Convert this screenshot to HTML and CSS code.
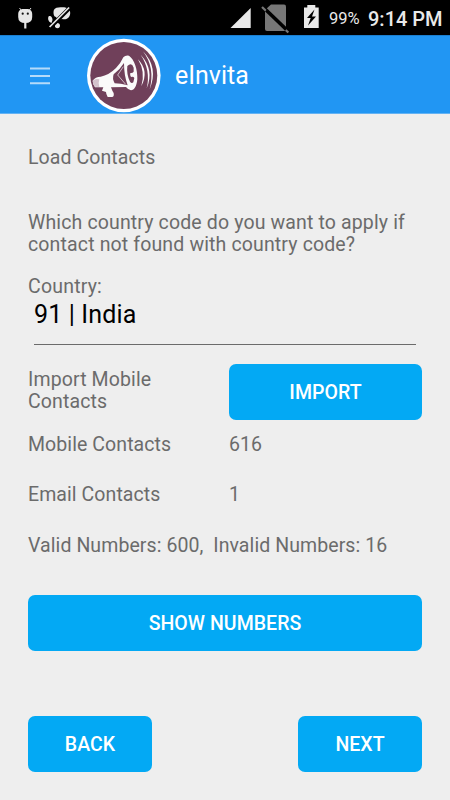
FILE: index.html
```html
<!DOCTYPE html>
<html lang="en">
<head>
<meta charset="utf-8">
<title>eInvita</title>
<link rel="stylesheet" href="styles.css">
</head>
<body>
<div class="status">
  <svg class="status-icons" width="80" height="35" viewBox="0 0 80 35">
    <g fill="#e6e6e6" stroke="#e6e6e6">
      <path d="M18.200 14q0-4 4-5h6q4 1 4 5v3q0 6-7 6t-7-6z" stroke="none"/>
      <path d="M21.500 10.500l-2-2.500M29 10.500l2-2.500" stroke-width="1"/>
      <path d="M25.300 22v6.500" stroke-width="2.200"/>
    </g>
    <circle cx="22.700" cy="13.700" r="1.100" fill="#111"/><circle cx="27.800" cy="13.700" r="1.100" fill="#111"/>
    <path fill="#e6e6e6" d="M53.500 12c0-3 2-4.500 5-4.500 4-.5 8-.5 10.500 1.500 2 3 1.500 7-1 9-2 2-5 1-6 1-3 1-5 0-6-2-2 0-2.500-3-2.500-5zM48.500 16.500c2-1.500 4 .5 4 3.500l-1 3c-3-1-4-4-3-6.500zM55 24c2-2 5-1 5 1.500 0 3-3 3.500-5 1.500z"/>
    <path d="M50.100 27.500l19.500-19.500" stroke="#000" stroke-width="4"/>
    <path d="M49.600 27l19.500-19.500" stroke="#e6e6e6" stroke-width="1.700"/>
  </svg>
  <svg class="status-icons" width="100" height="35" viewBox="230 0 100 35">
    <path fill="#e9e9e9" d="M230.500 28L250.700 8v20z"/>
    <path fill="#777" d="M265 10l6-5.500h13q2 0 2 2V29q0 2-2 2h-17q-2 0-2-2z"/>
    <path d="M264 7l25 24" stroke="#000" stroke-width="2"/>
    <path d="M262 7l26.300 25.500" stroke="#777" stroke-width="2.200"/>
    <path d="M266 10.500l20 19.300" stroke="#000" stroke-width="2.600"/>
    <path fill="#e9e9e9" d="M304 7.500h3.300V5h8v2.500h3.400V28H304z"/>
    <path fill="#000" d="M314.500 9.500l-7.500 8.500h3.700l-2.700 7.500 8-9h-4z"/>
  </svg>
  <span class="battery">99%</span>
  <span class="clock">9:14 PM</span>
</div>
<header class="bar">
  <svg class="menu" width="20" height="18" viewBox="0 0 20 18"><path d="M0 1.500h20M0 9h20M0 16.200h20" stroke="#b5dbfa" stroke-width="1.900"/></svg>
  <svg class="logo" width="74" height="76" viewBox="0 0 74 76">
    <circle cx="36.800" cy="38.500" r="36.800" fill="#fff"/>
    <circle cx="36.800" cy="38.500" r="33.500" fill="#70405a"/>
    <g transform="scale(.3333) translate(-21 -7)">
      <path fill="#fafafa" d="M38 138Q46 126 62 126Q86 122 108 100Q122 86 130 68Q136 61 147 63C163 74 173 104 172 134C170 154 163 167 153 167Q145 166 138 157L93 158Q97 170 101 175Q103 187 96 187L83 187Q78 178 78 172L66 168L70 158L45 158Q38 150 38 138z"/>
      <path fill="#d4c3cc" d="M38 138Q46 130 58 134Q54 146 58 157L45 156Q38 150 38 138z"/>
      <path fill="#70405a" d="M101 119Q119 106 132 85Q132 122 143 152Q122 146 104 146Q96 132 101 119z"/>
      <path d="M130 96L113 121L137 149" fill="none" stroke="#cdb9c4" stroke-width="3"/>
      <path fill="#70405a" d="M142 94Q155 82 161 99L161 111Q158 116 151 115Q149 121 153 127Q160 124 163 130L160 143Q155 148 150 141Q139 119 142 94z"/>
      <path fill="#fff" d="M174 74Q208 109 184 155Q197 111 174 74zM182 60Q224 106 200 161Q213 107 182 60zM189 50Q236 98 209 164Q226 99 189 50z"/>
    </g>
  </svg>
  <h1 class="title">eInvita</h1>
</header>
<main class="content">
  <p class="heading">Load Contacts</p>
  <p class="question">Which country code do you want to apply if<br>contact not found with country code?</p>
  <p class="country">Country:</p>
  <div class="select">91 | India</div>
  <div class="row import">
    <p>Import Mobile<br>Contacts</p>
    <button class="btn">IMPORT</button>
  </div>
  <div class="row stat"><p>Mobile Contacts</p><p>616</p></div>
  <div class="row stat second"><p>Email Contacts</p><p>1</p></div>
  <p class="valid">Valid Numbers: 600,&nbsp; Invalid Numbers: 16</p>
  <button class="btn show">SHOW NUMBERS</button>
  <div class="nav"><button class="btn">BACK</button><button class="btn">NEXT</button></div>
</main>
</body>
</html>
```
FILE: styles.css
```css
* { box-sizing: border-box; }
body {
  margin: 0;
  width: 450px;
  height: 800px;
  overflow: hidden;
  background: #eee;
  color: #6b6b6b;
  font: 19.5px/22px Roboto, sans-serif;
  letter-spacing: 0.08px;
}
p, h1 { margin: 0; font-weight: 400; }
svg { display: block; flex: none; }
.status {
  height: 35px;
  background: #000;
  color: #e9e9e9;
  display: flex;
  align-items: center;
  white-space: nowrap;
  letter-spacing: 0;
}
.status-icons + .status-icons { margin-left: 150px; }
.battery { font-size: 16.5px; margin: 3px 0 0 -1px; width: 38px; }
.clock { font-size: 20px; font-weight: 500; margin: 2px 0 0 1px; }
.bar {
  height: 79px;
  background: #2196f3;
  border-top: 1px solid #1b7fcf;
  border-bottom: 1px solid #63b2f3;
  display: flex;
  align-items: center;
}
.menu { margin: 2px 0 0 30px; }
.logo { margin-left: 37px; }
.title { margin: 2px 0 0 14px; color: #fff; font-size: 25px; line-height: 30px; letter-spacing: 0; }
.content { padding: 33px 28px 0; white-space: nowrap; }
.question { margin-top: 43px; letter-spacing: 0.14px; }
.country { margin-top: 20px; letter-spacing: 0.2px; }
.select {
  height: 47px;
  margin: 0 6px;
  padding-top: 2px;
  border-bottom: 1px solid #6b6b6b;
  color: #000;
  font-size: 25px;
  line-height: 30px;
  letter-spacing: 0.15px;
}
.row { display: grid; grid-template-columns: 201px 193px; }
.import { margin-top: 19px; align-items: center; }
.import p { margin-top: -2px; letter-spacing: 0.12px; }
.btn {
  height: 56px;
  padding: 2px 0 0;
  border: 0;
  border-radius: 7px;
  background: #03a9f4;
  color: #fff;
  font: 500 19.5px/22px Roboto, sans-serif;
  letter-spacing: 0.05px;
}
.stat { margin-top: 14px; }
.second { margin-top: 28px; }
.valid { margin-top: 29px; }
.show { display: block; width: 394px; margin-top: 38px; }
.nav { display: flex; justify-content: space-between; margin-top: 65px; }
.nav .btn { width: 124px; }
```
